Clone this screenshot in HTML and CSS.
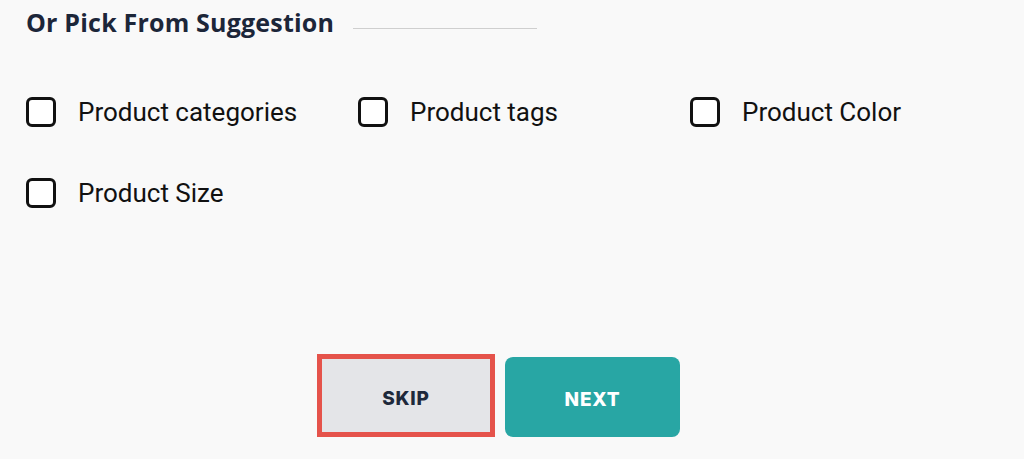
FILE: index.html
```html
<!DOCTYPE html>
<html>
<head>
<meta charset="utf-8">
<link rel="stylesheet" href="styles.css">
</head>
<body>
<div class="page">
  <div class="heading-row">
    <h2 class="heading">Or Pick From Suggestion</h2>
    <span class="heading-line"></span>
  </div>
  <div class="options">
    <label class="option"><span class="box"></span><span class="label">Product categories</span></label>
    <label class="option"><span class="box"></span><span class="label">Product tags</span></label>
    <label class="option"><span class="box"></span><span class="label">Product Color</span></label>
    <label class="option"><span class="box"></span><span class="label">Product Size</span></label>
  </div>
  <div class="actions">
    <button class="btn btn-skip">SKIP</button>
    <button class="btn btn-next">NEXT</button>
  </div>
</div>
</body>
</html>
```

FILE: styles.css
```css
html, body {
  margin: 0;
  padding: 0;
  background: #f9f9f9;
}
.page {
  padding: 6px 0 0 26px;
  width: 1024px;
  height: 459px;
  box-sizing: border-box;
}
.heading-row {
  display: flex;
  align-items: center;
  gap: 19px;
  height: 32px;
}
.heading {
  margin: 0;
  font-family: "Open Sans", sans-serif;
  font-weight: 700;
  font-size: 25px;
  letter-spacing: 0.2px;
  color: #1c2639;
  line-height: 32px;
}
.heading-line {
  display: block;
  width: 184px;
  height: 1px;
  background: #cfcfcf;
  margin-top: 12px;
}
.options {
  display: grid;
  grid-template-columns: 332px 332px 332px;
  row-gap: 51px;
  margin-top: 59px;
}
.option {
  display: flex;
  align-items: center;
  gap: 22px;
  height: 30px;
  cursor: pointer;
}
.box {
  width: 30px;
  height: 30px;
  box-sizing: border-box;
  border: 3px solid #111;
  border-radius: 6px;
  background: #fff;
  flex: none;
}
.label {
  font-family: Roboto, sans-serif;
  font-size: 26px;
  color: #111;
}
.actions {
  display: flex;
  align-items: flex-end;
  gap: 10px;
  margin-top: 146px;
  padding-left: 291px;
}
.btn {
  font-family: Inter, sans-serif;
  font-weight: 800;
  font-size: 19px;
  letter-spacing: 0.8px;
  border: none;
  padding: 5px 0 0;
  cursor: pointer;
}
.btn-skip {
  width: 178px;
  height: 83px;
  background: #e4e5e8;
  border: 5px solid #e5534b;
  color: #1e293b;
}
.btn-next {
  width: 175px;
  height: 80px;
  background: #28a6a4;
  color: #ffffff;
  border-radius: 8px;
}
```
